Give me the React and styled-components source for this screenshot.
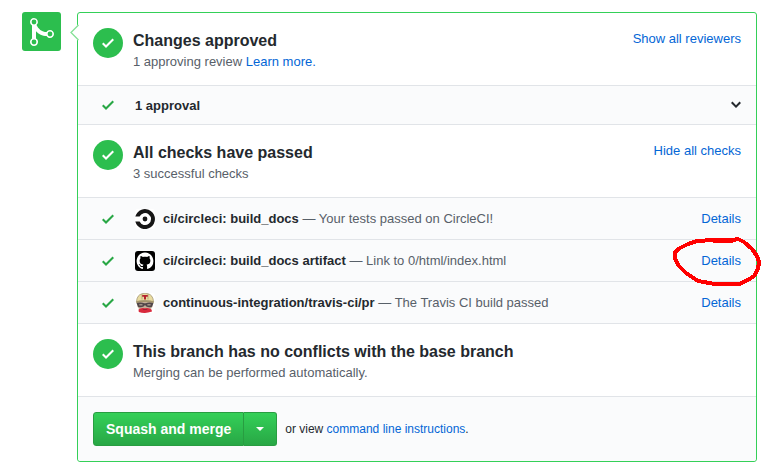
import React from "react";
import styled, { createGlobalStyle } from "styled-components";

const GlobalStyle = createGlobalStyle`
  *, *::before, *::after { box-sizing: border-box; }
  body {
    margin: 0;
    background: #fff;
    color: #24292e;
    font-family: "Liberation Sans", Arial, sans-serif;
    font-size: 13px;
    line-height: 20px;
  }
`;

const Page = styled.main`
  display: flex;
  align-items: flex-start;
  gap: 16px;
  padding: 12px 16px 12px 22px;
`;

const StateBadge = styled.div`
  display: flex;
  align-items: center;
  justify-content: center;
  flex: none;
  width: 39px;
  height: 39px;
  border-radius: 3px;
  background: #2cbe4e;
  color: #fff;
`;

const Panel = styled.section`
  position: relative;
  flex: 1;
  min-width: 0;
  border: 1px solid #34d058;
  border-radius: 3px;
`;

const Notch = styled.svg`
  position: absolute;
  left: -8px;
  top: 11px;
`;

const Section = styled.div`
  display: flex;
  align-items: flex-start;
  gap: 10px;
  padding: 15px;
  border-top: ${(p) => (p.$first ? "0" : "1px solid #e1e4e8")};
`;

const StatusCircle = styled.span`
  display: flex;
  align-items: center;
  justify-content: center;
  flex: none;
  width: 30px;
  height: 30px;
  border-radius: 50%;
  background: #2cbe4e;
  color: #fff;
`;

const SectionText = styled.div`
  flex: 1;
  min-width: 0;
`;

const Title = styled.h3`
  margin: 0;
  font-size: 16px;
  line-height: 26px;
  font-weight: 700;
`;

const Subtitle = styled.p`
  margin: 0;
  line-height: 16px;
  color: #586069;
`;

const Link = styled.a`
  color: #0366d6;
  text-decoration: none;
  &:hover { text-decoration: underline; }
`;

const TextButton = styled.button`
  padding: 0;
  border: 0;
  background: none;
  color: #0366d6;
  font: inherit;
  line-height: 22px;
  cursor: pointer;
`;

const Row = styled.div`
  display: flex;
  align-items: center;
  min-height: ${(p) => (p.$compact ? "39px" : "42px")};
  padding: 0 15px;
  border-top: 1px solid #e1e4e8;
  background: #fafbfc;
`;

const RowCheck = styled.span`
  display: flex;
  justify-content: center;
  width: 30px;
  margin-right: 12px;
  color: #28a745;
`;

const RowText = styled.div`
  flex: 1;
  min-width: 0;
  line-height: 21px;
  color: #586069;
`;

const Name = styled.strong`
  color: #24292e;
`;

const Toggle = styled.button`
  display: flex;
  padding: 0;
  border: 0;
  background: none;
  color: #24292e;
  cursor: pointer;
`;

const ServiceIcon = styled.svg`
  flex: none;
  width: 20px;
  height: 20px;
  margin-right: 8px;
  border-radius: 3px;
`;

const Marked = styled.span`
  position: relative;
`;

const Ring = styled.svg`
  position: absolute;
  left: -30px;
  top: -15px;
  z-index: 1;
  pointer-events: none;
`;

const MergeBar = styled.div`
  display: flex;
  align-items: center;
  gap: 8px;
  padding: 15px;
  border-top: 1px solid #e1e4e8;
  border-radius: 0 0 3px 3px;
  background: #fafbfc;
  font-size: 12px;
`;

const ButtonGroup = styled.div`
  display: flex;
`;

const GreenButton = styled.button`
  display: flex;
  align-items: center;
  justify-content: center;
  height: 34px;
  padding: 0 12px;
  border: 1px solid #289d41;
  border-radius: 3px 0 0 3px;
  background: linear-gradient(#34d058, #28a745);
  color: #fff;
  font: 700 14px/20px "Liberation Sans", Arial, sans-serif;
  cursor: pointer;
`;

const MenuButton = styled(GreenButton)`
  width: 33px;
  padding: 0;
  border-left: 0;
  border-radius: 0 3px 3px 0;
`;

const Check = () => (
  <svg width="12" height="16" viewBox="0 0 12 16" fill="currentColor" aria-hidden="true">
    <path d="M12 5l-8 8-4-4 1.5-1.5L4 10l6.5-6.5L12 5z" />
  </svg>
);

const MergeIcon = () => (
  <svg width="24" height="32" viewBox="0 0 12 16" aria-hidden="true">
    <path fill="#fff" d="M10 7c-.73 0-1.38.41-1.73 1.02V8C7.22 7.98 6 7.64 5.14 6.98c-.75-.58-1.5-1.61-1.89-2.44A1.993 1.993 0 0 0 2 1C.89 1 0 1.890 0 3a2 2 0 0 0 1 1.720v6.560c-.590.350-1 .990-1 1.720 0 1.110.890 2 2 2a1.993 1.993 0 0 0 1-3.720V7.670c.670.700 1.440 1.270 2.300 1.690.860.420 2.030.630 2.970.640v-.020c.360.610 1 1.020 1.730 1.020 1.110 0 2-.890 2-2 0-1.110-.890-2-2-2z" />
    <g fill="#2cbe4e">
      <circle cx="2" cy="3" r="1.2" />
      <circle cx="2" cy="13" r="1.2" />
      <circle cx="10" cy="9" r="1.2" />
    </g>
  </svg>
);

const CircleCi = () => (
  <ServiceIcon viewBox="0 0 20 20" aria-hidden="true">
    <rect width="20" height="20" fill="#fff" />
    <path d="M.3 7.6A10 10 0 1 1 .3 12.6H4.6A6 6 0 1 0 4.6 7.6Z" fill="#161616" />
    <circle cx="10" cy="10" r="2.4" fill="#161616" />
  </ServiceIcon>
);

const GitHubMark = () => (
  <ServiceIcon viewBox="0 0 20 20" aria-hidden="true">
    <rect width="20" height="20" fill="#000" />
    <path
      transform="translate(1.6 1.6) scale(1.05)"
      fill="#fff"
      d="M8 0C3.58 0 0 3.58 0 8c0 3.54 2.29 6.53 5.47 7.59.4.07.55-.17.55-.38 0-.19-.01-.82-.01-1.49-2.01.37-2.53-.49-2.69-.94-.09-.23-.48-.94-.82-1.13-.28-.15-.68-.52-.01-.53.63-.01 1.08.58 1.23.82.72 1.21 1.87.87 2.33.66.07-.52.28-.87.51-1.07-1.78-.2-3.64-.89-3.64-3.95 0-.87.31-1.59.82-2.15-.08-.2-.36-1.02.08-2.12 0 0 .67-.21 2.2.82.64-.18 1.32-.27 2-.27.68 0 1.36.09 2 .27 1.53-1.04 2.2-.82 2.2-.82.44 1.1.16 1.92.08 2.12.51.56.82 1.27.82 2.15 0 3.07-1.87 3.75-3.65 3.95.29.25.54.73.54 1.48 0 1.07-.01 1.93-.01 2.2 0 .21.15.46.55.38A8.013 8.013 0 0 0 16 8c0-4.42-3.58-8-8-8z"
    />
  </ServiceIcon>
);

const Travis = () => (
  <ServiceIcon viewBox="0 0 20 20" aria-hidden="true">
    <rect width="20" height="20" fill="#fff" />
    <path d="M2 9h16l-.6 5-2.6 3.6L10 20l-4.8-2.4L2.6 14z" fill="#c4ae98" />
    <path d="M1.5 8.5Q2 2 7 .7Q10-.3 13 .7Q18 2 18.5 8.5Q10 6.5 1.5 8.5Z" fill="#e9dba0" stroke="#8b7d5c" strokeWidth=".6" />
    <path d="M7 1v5.5M13 1v5.5" stroke="#a89b6e" strokeWidth=".7" />
    <path d="M7.2 2h5.6v1.8h-1.8V6.5H9V3.8H7.2z" fill="#b5232e" />
    <path d="M.8 8.6Q10 5.8 19.2 8.6L18.6 10Q10 8 1.4 10Z" fill="#a5966c" />
    <path d="M1.5 10Q6 8.7 9.3 10.3H10.7Q14 8.7 18.5 10L17 13.8Q14 15 11.4 13.6L10 12L8.6 13.6Q6 15 3 13.8Z" fill="#51474a" />
    <path d="M4.3 11h3.2v1.6H4.3zM12.4 11h3.2v1.6h-3.2z" fill="#a39186" />
    <path d="M3.5 16.5Q6.3 14.3 10 15.3Q13.7 14.3 16.5 16.5L17 18.5Q10 21 3.8 19Z" fill="#d8293c" />
    <path d="M7.5 16.2h5l-1 .7H8.5z" fill="#7a2730" />
  </ServiceIcon>
);

const checks = [
  { name: "ci/circleci: build_docs", text: "Your tests passed on CircleCI!", Icon: CircleCi },
  { name: "ci/circleci: build_docs artifact", text: "Link to 0/html/index.html", Icon: GitHubMark, marked: true },
  { name: "continuous-integration/travis-ci/pr", text: "The Travis CI build passed", Icon: Travis },
];

const HandDrawnRing = () => (
  <Ring width="92" height="52" viewBox="671 236 92 52" fill="none" stroke="#f00" strokeWidth="4" shapeRendering="crispEdges" aria-hidden="true">
    <path d="M738 239L744 242L752 249L757 256L759 262L758 269L754 276L748 280L739 284L715 284L698 281L686 273L678 265L675 258L675 252L680 248L688 244L697 241L714 240H733L738 239Z" strokeLinejoin="round" />
    <path d="M713 240H733" strokeWidth="5" />
  </Ring>
);

export default function App() {
  return (
    <>
      <GlobalStyle />
      <Page>
        <StateBadge><MergeIcon /></StateBadge>
        <Panel>
          <Notch width="9" height="17" viewBox="0 0 9 17" aria-hidden="true">
            <path d="M9 .5H8L.7 8.5L8 16.5H9Z" fill="#fff" />
            <path d="M8.5 1L1 8.5L8.5 16" fill="none" stroke="#85e097" strokeWidth="1.3" />
          </Notch>
          <Section $first>
            <StatusCircle><Check /></StatusCircle>
            <SectionText>
              <Title>Changes approved</Title>
              <Subtitle>1 approving review <Link href="#reviews">Learn more.</Link></Subtitle>
            </SectionText>
            <TextButton type="button">Show all reviewers</TextButton>
          </Section>
          <Row $compact>
            <RowCheck><Check /></RowCheck>
            <RowText><Name>1 approval</Name></RowText>
            <Toggle type="button" aria-label="Expand approvals">
              <svg width="10" height="16" viewBox="0 0 10 16" fill="currentColor" aria-hidden="true">
                <path d="M5 11L0 6l1.5-1.5L5 8.25 8.5 4.5 10 6l-5 5z" />
              </svg>
            </Toggle>
          </Row>
          <Section>
            <StatusCircle><Check /></StatusCircle>
            <SectionText>
              <Title>All checks have passed</Title>
              <Subtitle>3 successful checks</Subtitle>
            </SectionText>
            <TextButton type="button">Hide all checks</TextButton>
          </Section>
          {checks.map(({ name, text, Icon, marked }) => (
            <Row key={name}>
              <RowCheck><Check /></RowCheck>
              <Icon />
              <RowText><Name>{name}</Name> — {text}</RowText>
              <Marked>
                <Link href="#details">Details</Link>
                {marked && <HandDrawnRing />}
              </Marked>
            </Row>
          ))}
          <Section>
            <StatusCircle><Check /></StatusCircle>
            <SectionText>
              <Title>This branch has no conflicts with the base branch</Title>
              <Subtitle>Merging can be performed automatically.</Subtitle>
            </SectionText>
          </Section>
          <MergeBar>
            <ButtonGroup>
              <GreenButton type="button">Squash and merge</GreenButton>
              <MenuButton type="button" aria-label="Select merge method">
                <svg width="8" height="4" viewBox="0 0 8 4" fill="#fff" aria-hidden="true">
                  <path d="M0 0h8L4 4z" />
                </svg>
              </MenuButton>
            </ButtonGroup>
            <span>or view <Link href="#command-line">command line instructions</Link>.</span>
          </MergeBar>
        </Panel>
      </Page>
    </>
  );
}
